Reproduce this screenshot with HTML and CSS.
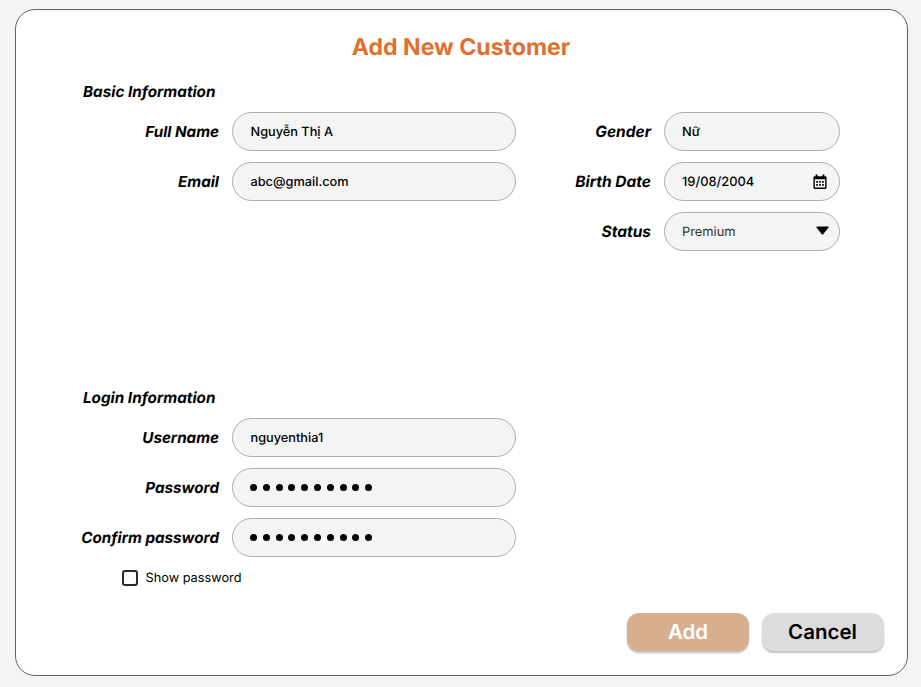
FILE: index.html
```html
<!DOCTYPE html>
<html lang="en">
<head>
<meta charset="utf-8">
<title>Add New Customer</title>
<link rel="stylesheet" href="styles.css">
</head>
<body>
<main class="card">
  <h1 class="title">Add New Customer</h1>

  <section class="section basic">
    <h2 class="heading">Basic Information</h2>
    <div class="columns">
      <div class="fields">
        <span class="label">Full Name</span><div class="field">Nguyễn Thị A</div>
        <span class="label">Email</span><div class="field">abc@gmail.com</div>
      </div>
      <div class="fields narrow">
        <span class="label">Gender</span><div class="field">Nữ</div>
        <span class="label">Birth Date</span>
        <div class="field">19/08/2004
          <svg class="calendar" viewBox="0 0 14 16" width="14" height="16">
            <path fill-rule="evenodd" d="M2.600 .5h1.900v1.700h5V.5h1.900v1.700h.8Q13.600 2.200 13.600 3.600v10Q13.600 15 12.200 15H1.800Q.4 15 .4 13.600v-10Q.4 2.200 1.800 2.200h.8zM1.800 5.300v8.300h10.400V5.300z"/>
            <path d="M3.200 7h1.700v1.700H3.200zM6.150 7h1.700v1.700h-1.700zM9.100 7h1.700v1.700H9.100zM3.200 10h1.700v1.700H3.200zM6.150 10h1.700v1.700h-1.700zM9.100 10h1.700v1.700H9.100z"/>
          </svg>
        </div>
        <span class="label">Status</span>
        <div class="field muted">Premium
          <svg class="caret" viewBox="0 0 13 10" width="13" height="10"><path d="M1 .5h11q1 0 .5.900L7.200 8.300q-.7.900-1.400 0L.5 1.400Q0 .5 1 .5z"/></svg>
        </div>
      </div>
    </div>
  </section>

  <section class="section login">
    <h2 class="heading">Login Information</h2>
    <div class="fields">
      <span class="label">Username</span><div class="field">nguyenthia1</div>
      <span class="label">Password</span>
      <div class="field dots"><i></i><i></i><i></i><i></i><i></i><i></i><i></i><i></i><i></i><i></i></div>
      <span class="label">Confirm password</span>
      <div class="field dots"><i></i><i></i><i></i><i></i><i></i><i></i><i></i><i></i><i></i><i></i></div>
    </div>
    <div class="show"><span class="box"></span><span class="show-text">Show password</span></div>
  </section>

  <div class="actions">
    <button class="button add">Add</button>
    <button class="button cancel">Cancel</button>
  </div>
</main>
</body>
</html>
```
FILE: styles.css
```css
* { box-sizing: border-box; }

body {
  margin: 0;
  height: 687px;
  padding: 9px 12px 0 15px;
  background: #f4f4f4;
  color: #000;
  font-family: Inter, sans-serif;
  text-rendering: geometricPrecision;
  overflow: hidden;
}

.card {
  width: 893px;
  height: 666.5px;
  border: 1px solid #626262;
  border-radius: 20px;
  background: #fff;
  display: flex;
  flex-direction: column;
}

.title {
  margin: 22px 0 0;
  padding-right: 1px;
  font-size: 23.1px;
  line-height: 30px;
  font-weight: 700;
  text-align: center;
  color: #de7130;
}

.section { padding-left: 57px; }
.basic { height: 306px; margin-top: 20px; }
.login { height: 206px; }

.heading {
  margin: 0 0 10px 10px;
  font-size: 15.25px;
  line-height: 20px;
  font-style: italic;
  font-weight: 700;
}

.columns { display: flex; gap: 46px; }

.fields {
  display: grid;
  grid-template-columns: 146px 284px;
  column-gap: 13px;
  grid-auto-rows: 39px;
  row-gap: 11px;
  align-content: start;
  align-items: center;
}

.narrow { grid-template-columns: 89px 176px; }

.label {
  font-size: 15.2px;
  font-style: italic;
  font-weight: 700;
  text-align: right;
  white-space: nowrap;
}

.narrow .label { font-size: 15.5px; }

.field {
  height: 39px;
  padding: 1px 9px 0 17.500px;
  border: 1px solid #adadad;
  border-radius: 20px;
  background: #f4f4f4;
  display: flex;
  align-items: center;
  font-size: 12.75px;
  line-height: 17px;
  font-weight: 450;
}

.narrow .field { padding-left: 17px; font-size: 12.85px; }

.muted { color: #333; font-weight: 400; }

.calendar { margin: -1px 3px 0 auto; }
.caret { margin: -3px 1px 0 auto; color: #000; }

.dots { gap: 5.800px; padding: 0 9px 0 17px; }
.dots i { width: 7px; height: 7px; border-radius: 50%; background: #000; }

.show {
  margin: 11px 0 0 49px;
  display: flex;
  align-items: center;
  gap: 7.500px;
  font-size: 12.75px;
  line-height: 18px;
}

.show-text { padding-top: 2px; }

.box {
  width: 16px;
  height: 16px;
  border: 2px solid #2a2a2a;
  border-radius: 3px;
}

.actions {
  margin-top: 19px;
  padding-right: 23.5px;
  display: flex;
  justify-content: flex-end;
  gap: 12.5px;
}

.button {
  width: 122px;
  height: 38px;
  padding: 0 0 1px;
  border: 0;
  border-radius: 12px;
  box-shadow: 0 2px 2px rgba(0, 0, 0, .25);
  font-family: inherit;
  font-size: 20.500px;
  font-weight: 600;
  text-rendering: inherit;
}

.add { background: #d7af8f; color: #fff; }
.cancel { background: #dcdcdc; color: #000; }
```
